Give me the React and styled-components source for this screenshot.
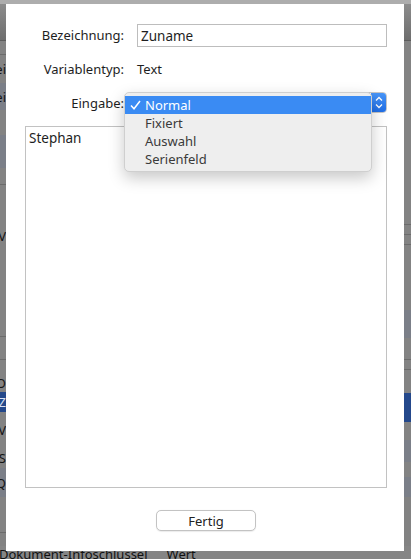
import React from 'react';
import styled, { createGlobalStyle } from 'styled-components';

const GlobalStyle = createGlobalStyle`
  html, body {
    margin: 0;
    padding: 0;
  }
  body {
    background: #808080;
    font-family: 'Noto Sans', 'DejaVu Sans', sans-serif;
  }
`;

// background window stripes, only the edges show beside the sheet
const leftRows = [
  { h: 14, line: true },
  { h: 28, text: 'Bezei' },
  { h: 27, tint: 'blue', text: 'Bezei' },
  { h: 25 },
  { h: 33, tint: 'blue' },
  { h: 17, line: true },
  { h: 40 },
  { h: 22, text: 'V' },
  { h: 90, line: true },
  { h: 23, line: true },
  { h: 14 },
  { h: 18, text: 'O' },
  { h: 20, tint: 'sel', text: 'Z' },
  { h: 36, text: 'V' },
  { h: 20, text: 'S' },
  { h: 29, tint: 'blue', text: 'Q' },
  { h: 36, line: true },
];

const rightRows = [
  { h: 184, line: true },
  { h: 10, line: true },
  { h: 10, line: true },
  { h: 65 },
  { h: 28, tint: 'blue' },
  { h: 22, line: true },
  { h: 10, line: true },
  { h: 23 },
  { h: 29, tint: 'sel' },
  { h: 18 },
  { h: 22, tint: 'blue' },
  { h: 15 },
  { h: 20, tint: 'blue' },
];

const tints = {
  plain: '#838383',
  blue: '#7b7f88',
  sel: '#24488b',
};

const menuItems = ['Normal', 'Fixiert', 'Auswahl', 'Serienfeld'];

const Screen = styled.div`
  position: relative;
  width: 411px;
  height: 559px;
  overflow: hidden;
`;

const Backdrop = styled.div`
  display: flex;
  flex-direction: column;
  height: 100%;
  background: #828282;
`;

const TitleStrip = styled.div`
  height: 4px;
  background: #adadad;
`;

const Toolbar = styled.div`
  height: 36px;
  background: linear-gradient(#8c8c8c, #6e6e6e);
  border-bottom: 1px solid #5c5c5c;
`;

const Panes = styled.div`
  flex: 1;
  min-height: 0;
  display: flex;
  justify-content: space-between;
`;

const Pane = styled.div`
  width: ${(p) => p.$w}px;
  display: flex;
  flex-direction: column;
  overflow: hidden;
`;

const Stripe = styled.div`
  height: ${(p) => p.$h}px;
  flex-shrink: 0;
  box-sizing: border-box;
  background: ${(p) => tints[p.$tint || 'plain']};
  border-bottom: ${(p) => (p.$line ? '1px solid #6b6b6b' : 'none')};
  display: flex;
  align-items: center;
  justify-content: flex-end;
  overflow: hidden;
  white-space: nowrap;
  font-size: 13px;
  color: ${(p) => (p.$tint === 'sel' ? '#d8e2f4' : '#141414')};
`;

const FooterHeader = styled.div`
  height: 13px;
  display: flex;
  gap: 19px;
  font-size: 13px;
  line-height: 16px;
  color: #121212;
  white-space: nowrap;
  background: #858585;
`;

const Sheet = styled.div`
  position: absolute;
  top: 4px;
  left: 6px;
  width: 398px;
  height: 547px;
  box-sizing: border-box;
  padding: 20px 17px 20px 19px;
  background: #fff;
  display: flex;
  flex-direction: column;
  color: #1e1e1e;
  font-size: 13px;
`;

const Form = styled.div`
  display: grid;
  grid-template-columns: 99px 250px;
  grid-auto-rows: 23px;
  column-gap: 13px;
  row-gap: 11px;
  align-items: center;
`;

const Label = styled.div`
  text-align: right;
  line-height: 23px;
`;

const Field = styled.div`
  height: 23px;
  box-sizing: border-box;
  border: 1px solid #bdbdbd;
  padding: 0 3px;
  display: flex;
  align-items: center;
  font-size: 13.5px;
`;

const Value = styled.div`
  line-height: 23px;
`;

const PopupWrap = styled.div`
  position: relative;
  align-self: start;
  height: 21px;
`;

const PopupButton = styled.div`
  height: 21px;
  box-sizing: border-box;
  border: 1px solid #c6c6c6;
  border-radius: 4px;
  background: #fff;
  display: flex;
  justify-content: flex-end;
  overflow: hidden;
`;

const Stepper = styled.div`
  width: 16px;
  margin: -1px -1px -1px 0;
  border-radius: 0 4px 4px 0;
  background: linear-gradient(#4a97f8, #1d6ce6);
  display: flex;
  align-items: center;
  justify-content: center;
`;

const Menu = styled.div`
  position: absolute;
  left: -13px;
  top: 0;
  width: 248px;
  box-sizing: border-box;
  padding: 3px 0;
  background: #eeeeee;
  border: 1px solid #cfcfcf;
  border-radius: 5px;
  box-shadow: 0 6px 16px rgba(0, 0, 0, 0.22);
  z-index: 2;
`;

const MenuItem = styled.div`
  position: relative;
  height: 18px;
  display: flex;
  align-items: center;
  padding-left: 20px;
  font-size: 13px;
  color: ${(p) => (p.$selected ? '#fff' : '#3a3a3a')};
  background: ${(p) => (p.$selected ? '#3a8bf3' : 'transparent')};
`;

const Check = styled.svg`
  position: absolute;
  left: 5px;
  top: 4px;
`;

const Notes = styled.div`
  margin-top: 11px;
  height: 362px;
  box-sizing: border-box;
  border: 1px solid #c2c2c2;
  padding: 2px 3px;
  line-height: 18px;
  font-size: 13.5px;
`;

const ButtonRow = styled.div`
  margin-top: 22px;
  display: flex;
  justify-content: center;
`;

const PushButton = styled.button`
  width: 100px;
  height: 21px;
  padding: 0;
  border: 1px solid #c3c3c3;
  border-radius: 5px;
  background: #fff;
  font-family: inherit;
  font-size: 13px;
  color: #222;
  box-shadow: 0 0.5px 1px rgba(0, 0, 0, 0.08);
`;

function StripeColumn({ rows, width }) {
  return (
    <Pane $w={width}>
      {rows.map((r, i) => (
        <Stripe key={i} $h={r.h} $tint={r.tint} $line={r.line}>
          {r.text}
        </Stripe>
      ))}
    </Pane>
  );
}

export default function App() {
  return (
    <Screen>
      <GlobalStyle />
      <Backdrop>
        <TitleStrip />
        <Toolbar />
        <Panes>
          <StripeColumn rows={leftRows} width={6} />
          <StripeColumn rows={rightRows} width={7} />
        </Panes>
        <FooterHeader>
          <span style={{ marginLeft: -1 }}>Dokument-Infoschlüssel</span>
          <span>Wert</span>
        </FooterHeader>
      </Backdrop>

      <Sheet>
        <Form>
          <Label>Bezeichnung:</Label>
          <Field>Zuname</Field>

          <Label>Variablentyp:</Label>
          <Value>Text</Value>

          <Label>Eingabe:</Label>
          <PopupWrap>
            <PopupButton>
              <Stepper>
                <svg width="8" height="13" viewBox="0 0 8 13">
                  <polyline points="1,4.5 4,1.5 7,4.5" fill="none" stroke="#fff" strokeWidth="1.3" />
                  <polyline points="1,8.5 4,11.5 7,8.5" fill="none" stroke="#fff" strokeWidth="1.3" />
                </svg>
              </Stepper>
            </PopupButton>
            <Menu>
              {menuItems.map((item, i) => (
                <MenuItem key={item} $selected={i === 0}>
                  {i === 0 && (
                    <Check width="11" height="10" viewBox="0 0 11 10">
                      <polyline points="1,5.5 4,8.8 10,1" fill="none" stroke="#fff" strokeWidth="1.5" />
                    </Check>
                  )}
                  {item}
                </MenuItem>
              ))}
            </Menu>
          </PopupWrap>
        </Form>

        <Notes>Stephan</Notes>

        <ButtonRow>
          <PushButton>Fertig</PushButton>
        </ButtonRow>
      </Sheet>
    </Screen>
  );
}
